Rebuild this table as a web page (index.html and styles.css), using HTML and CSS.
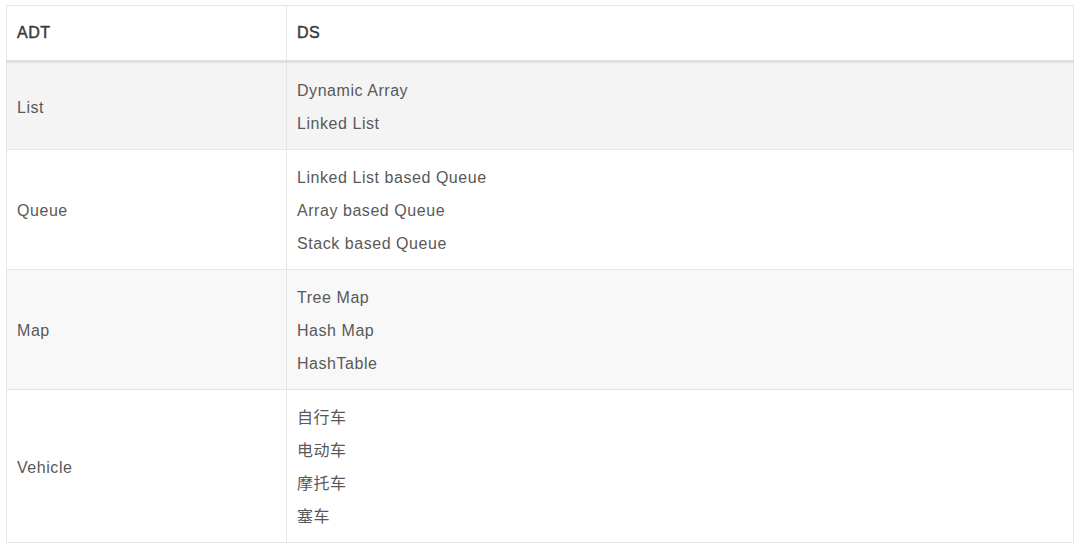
FILE: index.html
```html
<!DOCTYPE html>
<html lang="zh">
<head>
<meta charset="utf-8">
<link rel="stylesheet" href="styles.css">
</head>
<body>
<table class="adt-table">
  <thead>
    <tr><th class="col-adt">ADT</th><th>DS</th></tr>
  </thead>
  <tbody>
    <tr class="shade">
      <td>List</td>
      <td><div class="item">Dynamic Array</div><div class="item">Linked List</div></td>
    </tr>
    <tr>
      <td>Queue</td>
      <td><div class="item">Linked List based Queue</div><div class="item">Array based Queue</div><div class="item">Stack based Queue</div></td>
    </tr>
    <tr class="shade-light">
      <td>Map</td>
      <td><div class="item">Tree Map</div><div class="item">Hash Map</div><div class="item">HashTable</div></td>
    </tr>
    <tr>
      <td>Vehicle</td>
      <td><div class="item">自行车</div><div class="item">电动车</div><div class="item">摩托车</div><div class="item">塞车</div></td>
    </tr>
  </tbody>
</table>
</body>
</html>
```

FILE: styles.css
```css
html, body {
  margin: 0;
  background: #ffffff;
}
body {
  padding: 5px 6px 0 6px;
  font-family: "Liberation Sans", "Noto Sans CJK SC", sans-serif;
  font-size: 16px;
  letter-spacing: 0.55px;
  color: #595959;
}
.adt-table {
  width: 1068px;
  border-collapse: collapse;
  border: 1px solid #e6e6e6;
}
.adt-table th,
.adt-table td {
  border: 1px solid #e6e6e6;
  text-align: left;
  vertical-align: middle;
  padding: 11px 10px 9px 10px;
  line-height: 33px;
}
.adt-table th {
  font-weight: 400;
  color: #3a3a3a;
  padding: 10px 10px 11px 10px;
  border-bottom: 3px solid #e0e0e0;
  -webkit-text-stroke: 0.45px #3a3a3a;
}
.adt-table .col-adt {
  width: 259px;
}
.shade {
  background: #f4f4f4;
}
.shade-light {
  background: #f8f8f8;
}
.item {
  line-height: 33px;
}
```
